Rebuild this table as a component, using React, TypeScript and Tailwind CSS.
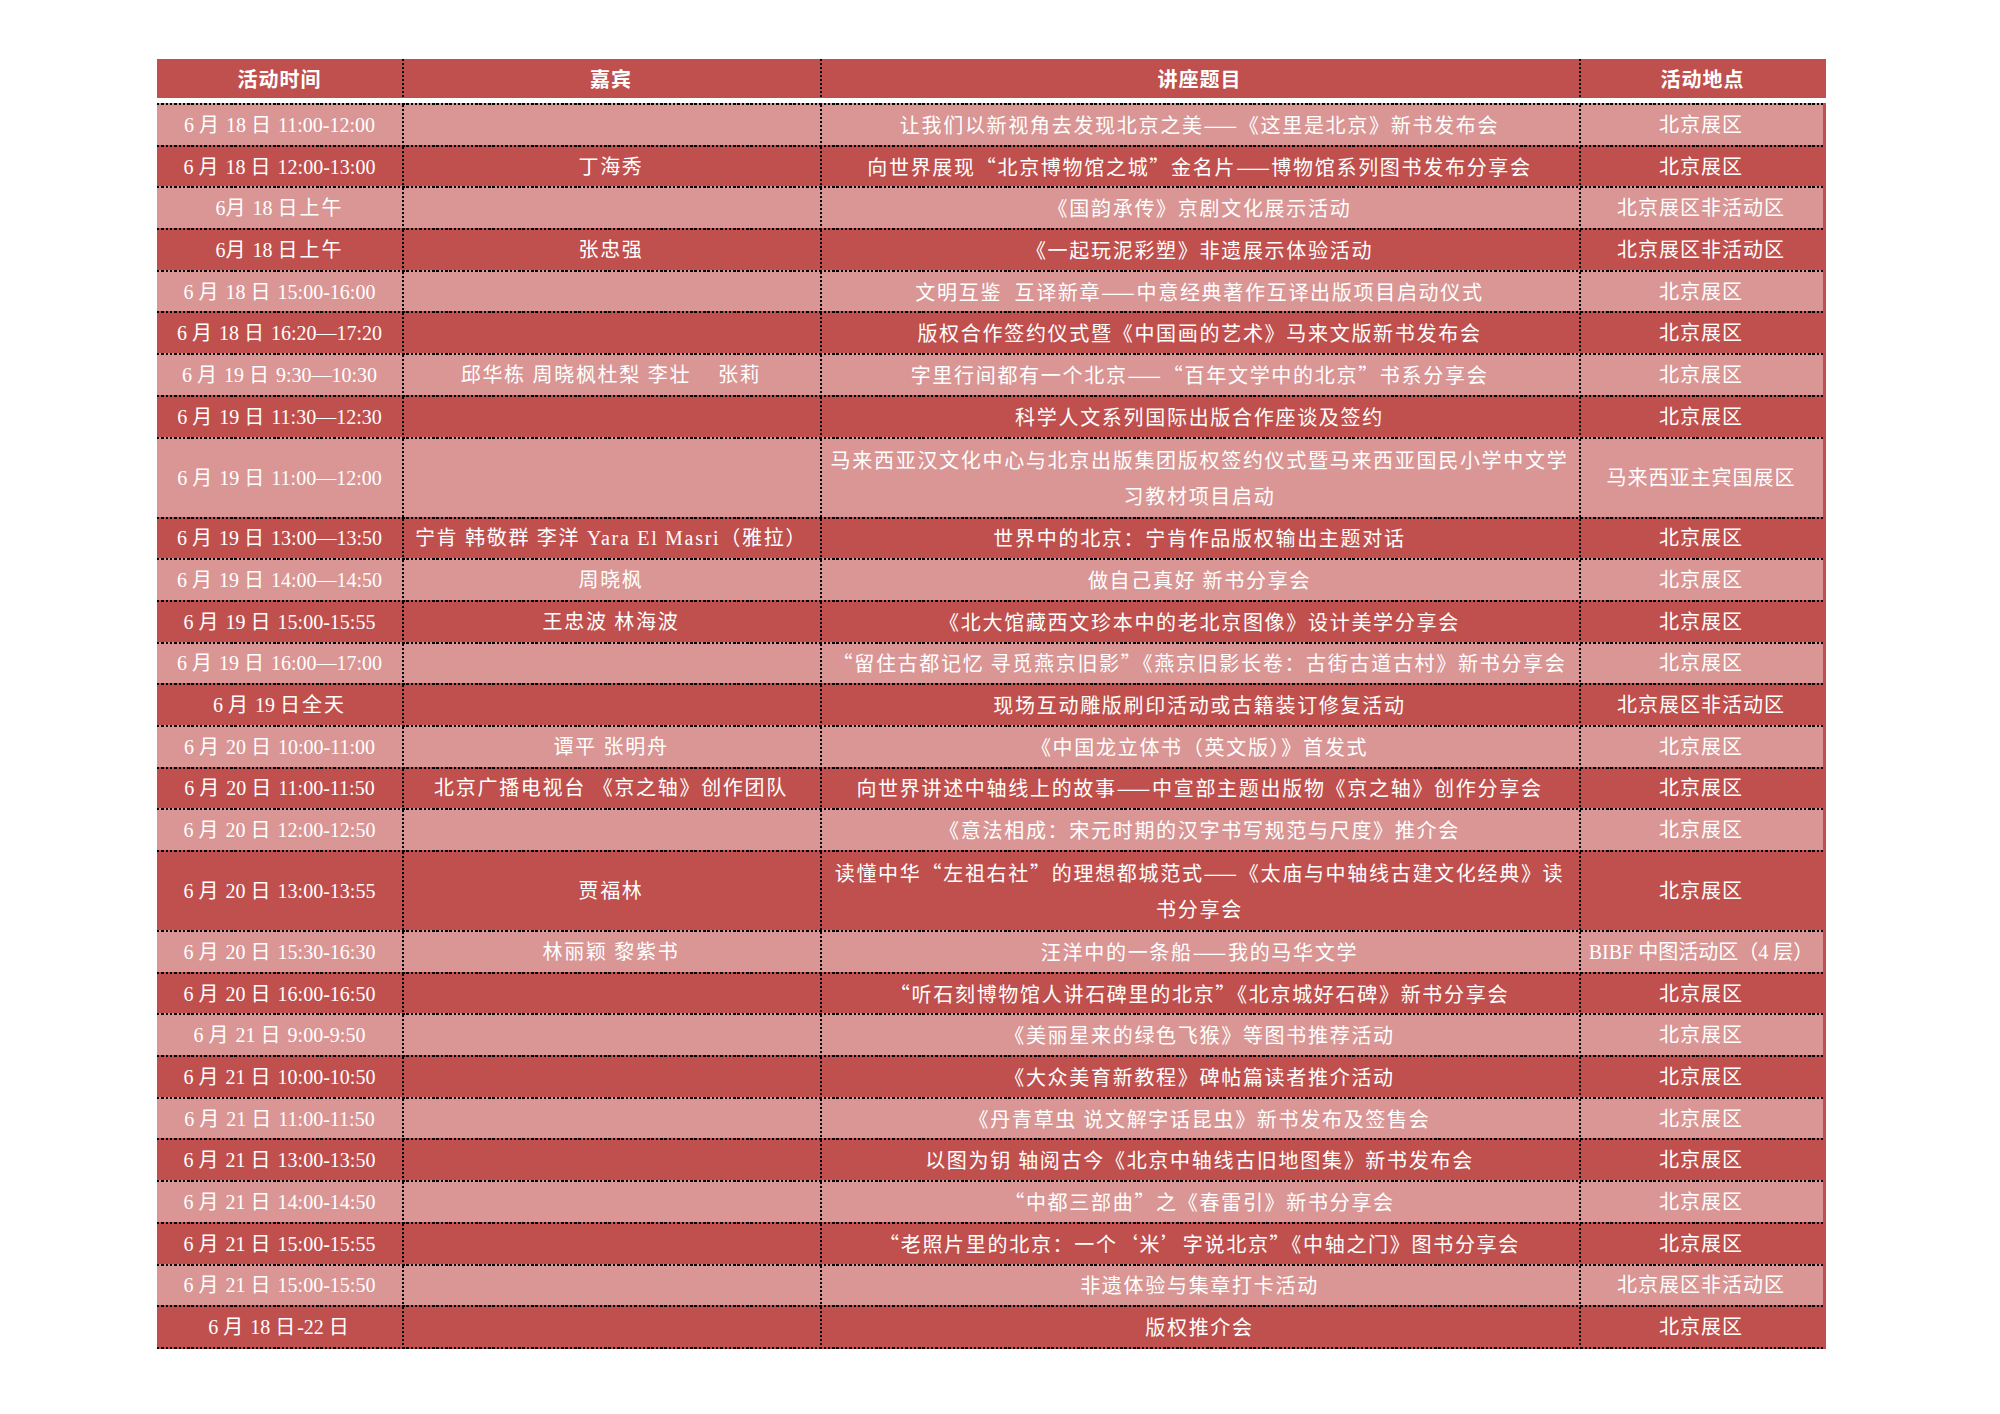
import React from "react";

type Row = {
  date: string;
  guest: string;
  title: string[];
  place: string;
  tall?: boolean;
};

const rows: Row[] = [
  { date: "6 月 18 日 11:00-12:00", guest: "", title: ["让我们以新视角去发现北京之美——《这里是北京》新书发布会"], place: "北京展区" },
  { date: "6 月 18 日 12:00-13:00", guest: "丁海秀", title: ["向世界展现“北京博物馆之城”金名片——博物馆系列图书发布分享会"], place: "北京展区" },
  { date: "6月 18 日上午", guest: "", title: ["《国韵承传》京剧文化展示活动"], place: "北京展区非活动区" },
  { date: "6月 18 日上午", guest: "张忠强", title: ["《一起玩泥彩塑》非遗展示体验活动"], place: "北京展区非活动区" },
  { date: "6 月 18 日 15:00-16:00", guest: "", title: ["文明互鉴  互译新章——中意经典著作互译出版项目启动仪式"], place: "北京展区" },
  { date: "6 月 18 日 16:20—17:20", guest: "", title: ["版权合作签约仪式暨《中国画的艺术》马来文版新书发布会"], place: "北京展区" },
  { date: "6 月 19 日 9:30—10:30", guest: "邱华栋 周晓枫杜梨 李壮    张莉", title: ["字里行间都有一个北京——“百年文学中的北京”书系分享会"], place: "北京展区" },
  { date: "6 月 19 日 11:30—12:30", guest: "", title: ["科学人文系列国际出版合作座谈及签约"], place: "北京展区" },
  { date: "6 月 19 日 11:00—12:00", guest: "", title: ["马来西亚汉文化中心与北京出版集团版权签约仪式暨马来西亚国民小学中文学", "习教材项目启动"], place: "马来西亚主宾国展区", tall: true },
  { date: "6 月 19 日 13:00—13:50", guest: "宁肯 韩敬群 李洋 Yara El Masri（雅拉）", title: ["世界中的北京：宁肯作品版权输出主题对话"], place: "北京展区" },
  { date: "6 月 19 日 14:00—14:50", guest: "周晓枫", title: ["做自己真好 新书分享会"], place: "北京展区" },
  { date: "6 月 19 日 15:00-15:55", guest: "王忠波 林海波", title: ["《北大馆藏西文珍本中的老北京图像》设计美学分享会"], place: "北京展区" },
  { date: "6 月 19 日 16:00—17:00", guest: "", title: ["“留住古都记忆 寻觅燕京旧影”《燕京旧影长卷：古街古道古村》新书分享会"], place: "北京展区" },
  { date: "6 月 19 日全天", guest: "", title: ["现场互动雕版刷印活动或古籍装订修复活动"], place: "北京展区非活动区" },
  { date: "6 月 20 日 10:00-11:00", guest: "谭平 张明舟", title: ["《中国龙立体书（英文版）》首发式"], place: "北京展区" },
  { date: "6 月 20 日 11:00-11:50", guest: "北京广播电视台 《京之轴》创作团队", title: ["向世界讲述中轴线上的故事——中宣部主题出版物《京之轴》创作分享会"], place: "北京展区" },
  { date: "6 月 20 日 12:00-12:50", guest: "", title: ["《意法相成：宋元时期的汉字书写规范与尺度》推介会"], place: "北京展区" },
  { date: "6 月 20 日 13:00-13:55", guest: "贾福林", title: ["读懂中华“左祖右社”的理想都城范式——《太庙与中轴线古建文化经典》读", "书分享会"], place: "北京展区", tall: true },
  { date: "6 月 20 日 15:30-16:30", guest: "林丽颖 黎紫书", title: ["汪洋中的一条船——我的马华文学"], place: "BIBF 中图活动区（4 层）" },
  { date: "6 月 20 日 16:00-16:50", guest: "", title: ["“听石刻博物馆人讲石碑里的北京”《北京城好石碑》新书分享会"], place: "北京展区" },
  { date: "6 月 21 日 9:00-9:50", guest: "", title: ["《美丽星来的绿色飞猴》等图书推荐活动"], place: "北京展区" },
  { date: "6 月 21 日 10:00-10:50", guest: "", title: ["《大众美育新教程》碑帖篇读者推介活动"], place: "北京展区" },
  { date: "6 月 21 日 11:00-11:50", guest: "", title: ["《丹青草虫 说文解字话昆虫》新书发布及签售会"], place: "北京展区" },
  { date: "6 月 21 日 13:00-13:50", guest: "", title: ["以图为钥 轴阅古今《北京中轴线古旧地图集》新书发布会"], place: "北京展区" },
  { date: "6 月 21 日 14:00-14:50", guest: "", title: ["“中都三部曲”之《春雷引》新书分享会"], place: "北京展区" },
  { date: "6 月 21 日 15:00-15:55", guest: "", title: ["“老照片里的北京：一个‘米’字说北京”《中轴之门》图书分享会"], place: "北京展区" },
  { date: "6 月 21 日 15:00-15:50", guest: "", title: ["非遗体验与集章打卡活动"], place: "北京展区非活动区" },
  { date: "6 月 18 日-22 日", guest: "", title: ["版权推介会"], place: "北京展区" },
];

const serif = "font-['Liberation_Serif','Noto_Sans_CJK_SC',serif]";
const cjk = "font-['Noto_Sans_CJK_SC','Liberation_Serif',sans-serif]";

// vertical dotted divider drawn as a 2px background strip on the left of a cell
const vline =
  "bg-[repeating-linear-gradient(180deg,#000_0px,#000_2px,transparent_2px,transparent_4px)] bg-no-repeat bg-left bg-[length:2px_100%]";

// horizontal dotted rule
const hline =
  "h-[2px] bg-[repeating-linear-gradient(90deg,#000_0px,#000_2.4px,transparent_2.4px,transparent_4.3px)]";

function DateText({ text }: { text: string }) {
  const parts = text.split(/([\u4e00-\u9fff])/);
  return (
    <>
      {parts.map((p, i) =>
        /[\u4e00-\u9fff]/.test(p) ? (
          <span key={i} className="tracking-[2px]">
            {p}
          </span>
        ) : (
          <span key={i}>{p}</span>
        )
      )}
    </>
  );
}

export default function App() {
  return (
    <div className="min-h-screen bg-white pt-[59px] pl-[157px]">
      <div className="w-[1669px] text-white">
        <div className="grid h-[39px] grid-cols-[245px_418px_759px_1fr] bg-[#C0504D] text-[20px] font-bold tracking-[1px] font-['Noto_Sans_CJK_SC',sans-serif]">
          <div className="flex items-center justify-center">活动时间</div>
          <div className={`flex items-center justify-center ${vline}`}>嘉宾</div>
          <div className={`flex items-center justify-center ${vline}`}>讲座题目</div>
          <div className={`flex items-center justify-center ${vline}`}>活动地点</div>
        </div>
        <div className="h-[5px] bg-white"></div>
        {rows.map((r, i) => {
          const light = i % 2 === 0;
          const last = i === rows.length - 1;
          return (
            <div
              key={i}
              className={`flex flex-col border-r-[3px] border-r-[#C0504D] ${light ? "bg-[#D99694]" : "bg-[#C0504D]"}`}
            >
              <div className={hline}></div>
              <div
                className={`grid grid-cols-[245px_418px_759px_1fr] ${r.tall ? "h-[78px]" : "h-[39.7px]"}`}
              >
                <div className={`flex items-center justify-center text-[20px] whitespace-pre ${serif}`}>
                  <DateText text={r.date} />
                </div>
                <div className={`flex items-center justify-center text-[20px] tracking-[1.7px] whitespace-pre ${serif} ${vline}`}>
                  {r.guest}
                </div>
                <div className={`flex flex-col items-center justify-center text-[20px] tracking-[1.7px] leading-[36px] whitespace-pre ${cjk} ${vline}`}>
                  {r.title.map((t, j) => (
                    <span key={j}>{t}</span>
                  ))}
                </div>
                <div
                  className={`flex items-center justify-center text-[20px] whitespace-pre ${serif} ${vline} ${
                    r.place.startsWith("BIBF") ? "tracking-[0px]" : "tracking-[1px]"
                  }`}
                >
                  {r.place}
                </div>
              </div>
              {last && <div className={hline}></div>}
            </div>
          );
        })}
      </div>
    </div>
  );
}
